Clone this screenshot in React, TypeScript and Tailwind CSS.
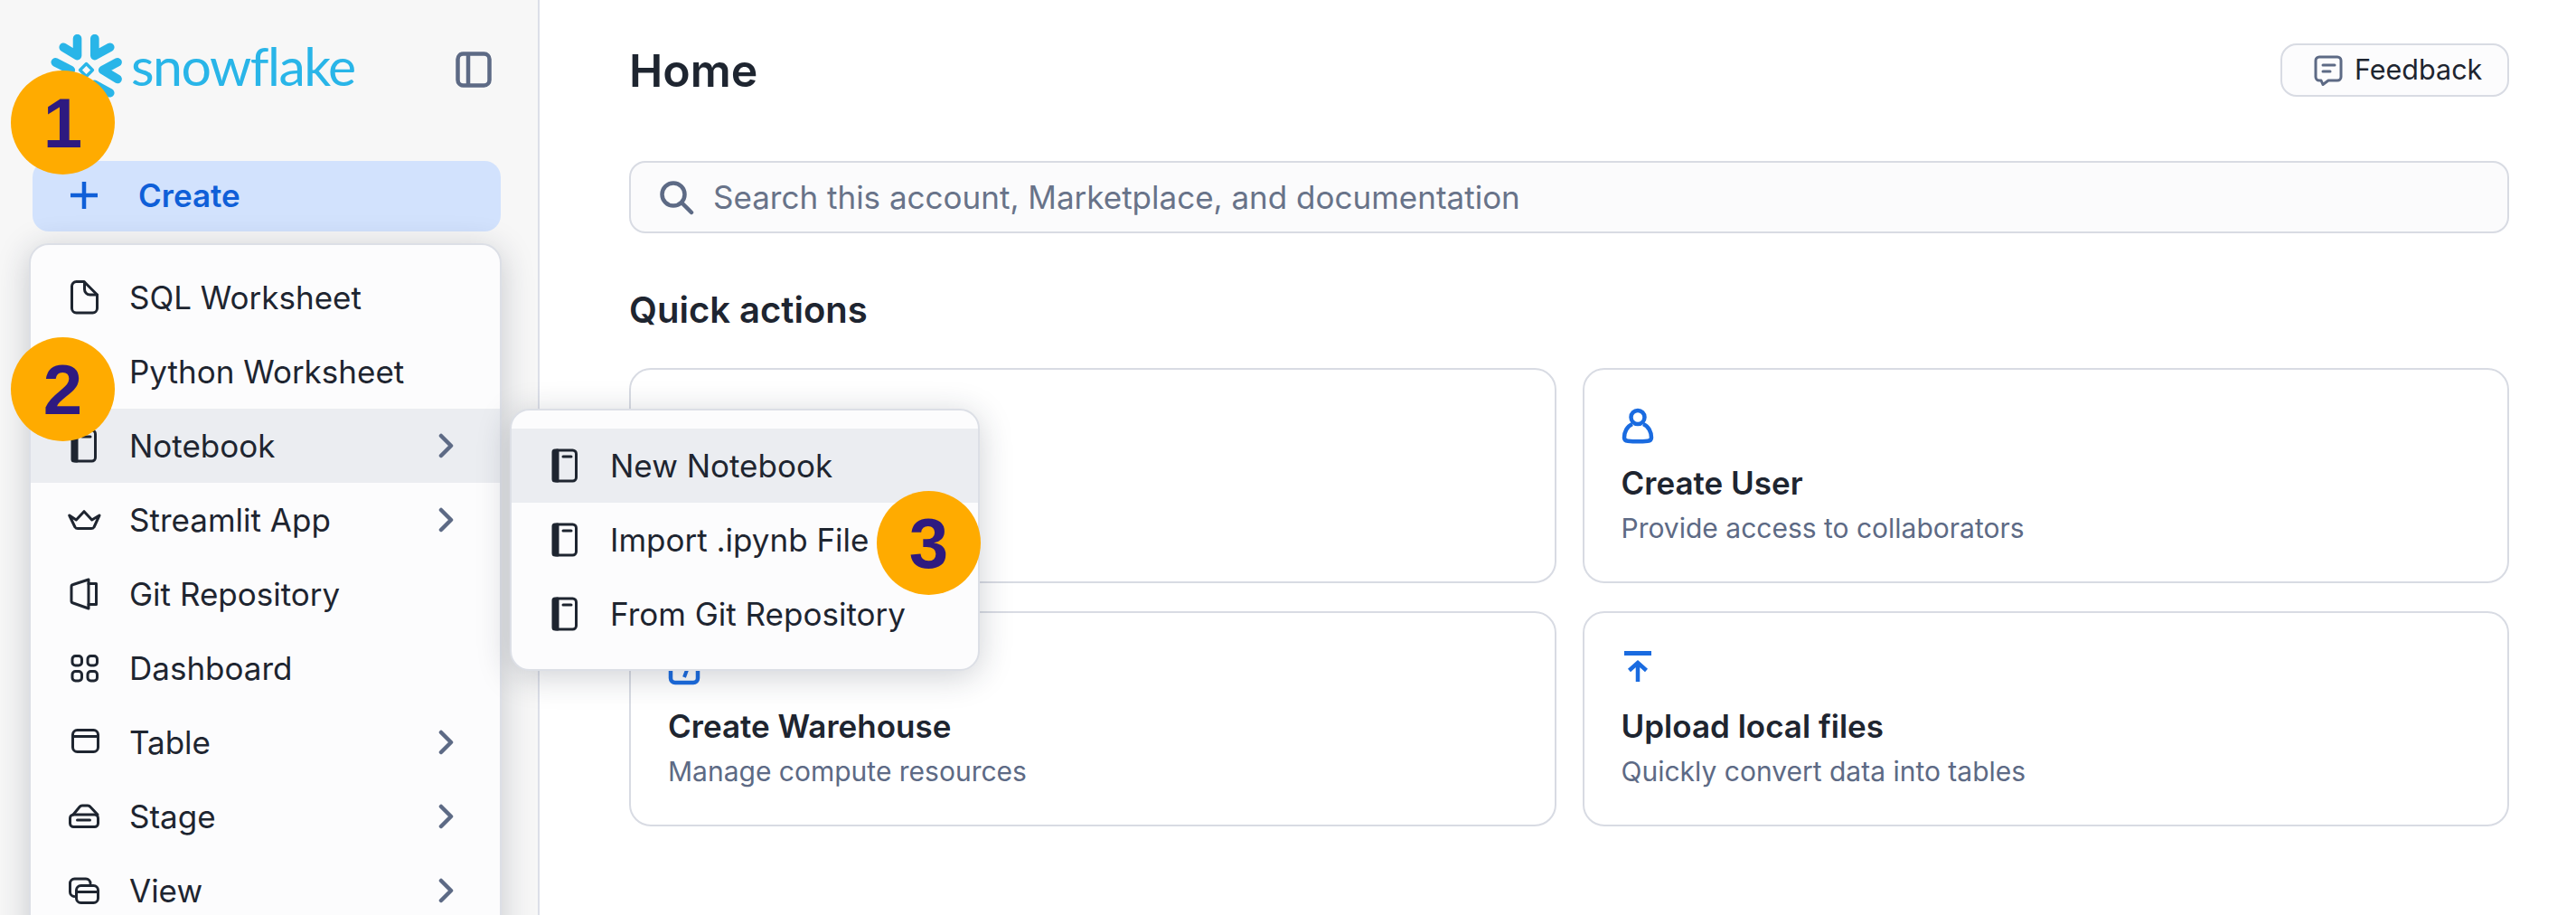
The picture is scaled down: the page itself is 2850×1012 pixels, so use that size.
import React from "react";

const ink = "#1e2530";

const Icon = ({ children, className = "" }: { children: React.ReactNode; className?: string }) => (
  <svg
    viewBox="0 0 40 40"
    fill="none"
    stroke="currentColor"
    strokeWidth="3"
    strokeLinecap="round"
    strokeLinejoin="round"
    className={`h-10 w-10 shrink-0 ${className}`}
  >
    {children}
  </svg>
);

const FileIcon = () => (
  <Icon>
    <path d="M11.500 2.500H20L34.500 17v15a5 5 0 0 1-5 5h-18a5 5 0 0 1-5-5V7.500a5 5 0 0 1 5-5z" />
    <path d="M20.500 3v8a6 6 0 0 0 6 6h8" />
  </Icon>
);

const NotebookIcon = () => (
  <Icon>
    <rect x="7.500" y="3" width="25" height="34" rx="4" />
    <path d="M9 3h3v34H9a2 2 0 0 1-2-2V5a2 2 0 0 1 2-2z" fill="currentColor" />
    <path d="M18 10h9" />
  </Icon>
);

const CrownIcon = () => (
  <Icon>
    <path d="M3.700 15l7.600 5L20 10.700 28.700 20l8.300-5-6 13q-1 1.500-3 1.500H13q-2 0-3-1.500z" />
  </Icon>
);

const RepoIcon = () => (
  <Icon>
    <path d="M25 4v32l-17-6a2.500 2.500 0 0 1-2-2.500V12a2.500 2.500 0 0 1 2-2.500z" />
    <path d="M25 8.500h8.500v23H25" />
  </Icon>
);

const GridIcon = () => (
  <Icon>
    <rect x="7" y="6.500" width="10.500" height="10.500" rx="3.500" />
    <rect x="24" y="6.500" width="10.500" height="10.500" rx="3.500" />
    <rect x="7" y="23.500" width="10.500" height="10.500" rx="3.500" />
    <rect x="24" y="23.500" width="10.500" height="10.500" rx="3.500" />
  </Icon>
);

const TableIcon = () => (
  <Icon>
    <rect x="7.500" y="6.500" width="28" height="24" rx="5" />
    <path d="M7.500 13.500h28" />
  </Icon>
);

const StageIcon = () => (
  <Icon>
    <path d="M8 18l7-8.500a4 4 0 0 1 3-1.500h6a4 4 0 0 1 3 1.500l8 8.500" />
    <rect x="4.500" y="18" width="31" height="13.500" rx="4" />
    <path d="M12.500 24h14" />
  </Icon>
);

const ViewIcon = () => (
  <Icon>
    <path d="M9 26.500a5 5 0 0 1-4.500-5V12a5 5 0 0 1 5-5H22a5 5 0 0 1 5 5" />
    <rect x="11.500" y="14.500" width="24" height="19" rx="5" />
    <path d="M11.500 21.500h24" />
  </Icon>
);

const Chevron = () => (
  <svg viewBox="0 0 24 28" fill="none" stroke="#5d6a85" strokeWidth="4.500" strokeLinecap="round" strokeLinejoin="round" className="h-7 w-6 shrink-0">
    <path d="M6 3l11 11L6 25" />
  </svg>
);

const menuItems = [
  { label: "SQL Worksheet", icon: <FileIcon /> },
  { label: "Python Worksheet", icon: <FileIcon /> },
  { label: "Notebook", icon: <NotebookIcon />, more: true, active: true },
  { label: "Streamlit App", icon: <CrownIcon />, more: true },
  { label: "Git Repository", icon: <RepoIcon /> },
  { label: "Dashboard", icon: <GridIcon /> },
  { label: "Table", icon: <TableIcon />, more: true },
  { label: "Stage", icon: <StageIcon />, more: true },
  { label: "View", icon: <ViewIcon />, more: true },
];

const subItems = [
  { label: "New Notebook", active: true },
  { label: "Import .ipynb File" },
  { label: "From Git Repository" },
];

const UserIcon = () => (
  <svg viewBox="0 0 36 40" fill="none" stroke="#1a6be0" strokeWidth="4.500" strokeLinejoin="round" className="h-10 w-9">
    <circle cx="18" cy="10.500" r="7.500" />
    <path d="M12 18C6 20.500 3 27 3 33c0 2 1.500 3.500 4 3.700 7 .8 15 .8 22 0 2.500-.2 4-1.700 4-3.700 0-6-3-12.500-9-15" />
  </svg>
);

const WarehouseIcon = () => (
  <svg viewBox="0 0 36 40" fill="none" stroke="#1a6be0" strokeWidth="4.500" className="h-10 w-9">
    <rect x="3" y="2" width="30" height="33" rx="5" />
    <path d="M21 21l-3 8" strokeWidth="4" />
  </svg>
);

const UploadIcon = () => (
  <svg viewBox="0 0 36 40" fill="none" stroke="#1a6be0" strokeWidth="4.500" className="h-10 w-9">
    <path d="M3 2.500h30" strokeWidth="5" />
    <path d="M18 34V14M8.500 21.500L18 13l9.500 8.500" />
  </svg>
);

// the first card sits behind the flyout, nothing of its content shows
const cards = [
  { key: "hidden" },
  { key: "user", title: "Create User", desc: "Provide access to collaborators", icon: <UserIcon /> },
  { key: "warehouse", title: "Create Warehouse", desc: "Manage compute resources", icon: <WarehouseIcon /> },
  { key: "upload", title: "Upload local files", desc: "Quickly convert data into tables", icon: <UploadIcon /> },
];

const Badge = ({ n, className }: { n: number; className: string }) => (
  <div
    className={`absolute z-30 flex h-[115px] w-[115px] items-center justify-center rounded-full bg-[#ffab00] font-['Liberation_Sans',Arial,sans-serif] text-[78px] leading-none font-bold text-[#2e1a80] ${className}`}
  >
    {n}
  </div>
);

const Logo = () => (
  <div className="flex items-start">
    <svg viewBox="108 54 238 238" fill="none" stroke="#29b5e8" strokeWidth="29" strokeLinecap="round" strokeLinejoin="round" className="mt-[38px] ml-[56px] h-[79px] w-[79px] shrink-0">
      <path d="M197 68v57l-46-28" />
      <path d="M255 68v57l51-28" />
      <path d="M331 147l-49 26 49 30" />
      <path d="M124 147l51 26-51 30" />
      <path d="M197 278v-57l-46 28" />
      <path d="M255 278v-57l51 28" />
      <path d="M227 152l21 21-21 21-21-21z" strokeWidth="10" />
    </svg>
    <span className="mt-[38px] ml-[10px] font-['Lato',sans-serif] text-[59px] leading-[70px] font-normal tracking-[-1.500px] text-[#29b5e8]">
      snowflake
    </span>
  </div>
);

export default function App() {
  return (
    <div className="relative flex h-[1012px] w-[2850px] overflow-hidden bg-white font-['Inter',sans-serif]" style={{ color: ink }}>
      {/* left nav */}
      <aside className="w-[597px] shrink-0 overflow-hidden border-r-2 border-[#dcdfe8] bg-[#f7f7f7]">
        <div className="relative h-[178px]">
          <Logo />
          <svg viewBox="0 0 40 40" fill="none" stroke="#5d6a85" strokeWidth="4.500" className="absolute top-[57px] left-[504px] h-10 w-10">
            <rect x="2.500" y="2.500" width="35" height="35" rx="6" />
            <path d="M14 3v34" />
          </svg>
        </div>
        <div className="ml-[36px] flex h-[78px] w-[518px] items-center rounded-[18px] bg-[#d2e2fd] pb-[2px] pl-[37px] text-[#0f5fd8]">
          <svg viewBox="0 0 40 40" fill="none" stroke="currentColor" strokeWidth="4.500" className="h-10 w-10 shrink-0">
            <path d="M20 5v30M5 20h30" />
          </svg>
          <span className="ml-[40px] text-[35px] leading-none font-semibold">Create</span>
        </div>
        <div className="mt-[13px] ml-[32px] h-[800px] w-[523px] rounded-[22px] border-2 border-[#dcdfe6] bg-[#fcfcfd] pt-[17px] shadow-[0_6px_36px_rgba(30,40,60,0.22)]">
          {menuItems.map((item) => (
            <div
              key={item.label}
              className={`flex h-[82px] items-center pr-[47px] pl-[39px] ${item.active ? "bg-[#ebedf1]" : ""}`}
            >
              {item.icon}
              <span className="ml-[30px] flex-1 text-[35px] leading-none">{item.label}</span>
              {item.more && <Chevron />}
            </div>
          ))}
        </div>
      </aside>

      <main className="min-w-0 flex-1 pt-[48px] pr-[74px] pl-[99px]">
        <div className="flex h-[59px] items-center justify-between">
          <h1 className="text-[50px] leading-none font-semibold">Home</h1>
          <button className="flex h-[59px] w-[253px] items-center rounded-[18px] border-2 border-[#d8dbe3] bg-[#fcfcfd] pl-[35px]">
            <svg viewBox="0 0 32 34" fill="none" stroke="#5d6a85" strokeWidth="3" strokeLinejoin="round" className="h-[34px] w-8 shrink-0">
              <path d="M6 2h20a4 4 0 0 1 4 4v18a4 4 0 0 1-4 4H16l-6 4.500-2-4.500H6a4 4 0 0 1-4-4V6a4 4 0 0 1 4-4z" />
              <path d="M10 11h13M10 18h8" strokeLinecap="round" />
            </svg>
            <span className="ml-[13px] text-[30.500px] leading-none">Feedback</span>
          </button>
        </div>

        <div className="mt-[71px] flex h-[80px] items-center rounded-[18px] border-2 border-[#d8dbe3] bg-[#fbfbfc] pl-[30px]">
          <svg viewBox="0 0 40 40" fill="none" stroke="#5d6a85" strokeWidth="4.500" strokeLinecap="round" className="h-10 w-10 shrink-0">
            <circle cx="17" cy="17" r="12.500" />
            <path d="M26.500 26.500L37 37" />
          </svg>
          <span className="ml-[21px] text-[35px] leading-none text-[#687389]">
            Search this account, Marketplace, and documentation
          </span>
        </div>

        <h2 className="mt-[60px] text-[40px] leading-[50px] font-semibold">Quick actions</h2>

        <div className="mt-[39px] grid grid-cols-2 gap-x-[29px] gap-y-[31px]">
          {cards.map((card) => (
            <div key={card.key} className="h-[238px] rounded-[24px] border-2 border-[#d8dbe3] bg-white pt-[42px] pl-[41px]">
              {card.title && (
                <>
                  <div className="h-10">{card.icon}</div>
                  <div className="mt-[21px] text-[35px] leading-[44px] font-semibold">{card.title}</div>
                  <div className="mt-[8px] text-[30px] leading-[40px] text-[#5d6a85]">{card.desc}</div>
                </>
              )}
            </div>
          ))}
        </div>
      </main>

      {/* notebook flyout */}
      <div className="absolute top-[452px] left-[564px] z-20 h-[290px] w-[520px] overflow-hidden rounded-[22px] border-2 border-[#dcdfe6] bg-[#fcfcfd] pt-[20px] shadow-[0_6px_36px_rgba(30,40,60,0.22)]">
        {subItems.map((item) => (
          <div key={item.label} className={`flex h-[82px] items-center pl-[39px] ${item.active ? "bg-[#ebedf1]" : ""}`}>
            <NotebookIcon />
            <span className="ml-[30px] text-[35px] leading-none">{item.label}</span>
          </div>
        ))}
      </div>

      <Badge n={1} className="top-[78px] left-[12px]" />
      <Badge n={2} className="top-[373px] left-[12px]" />
      <Badge n={3} className="top-[543px] left-[970px]" />
    </div>
  );
}
